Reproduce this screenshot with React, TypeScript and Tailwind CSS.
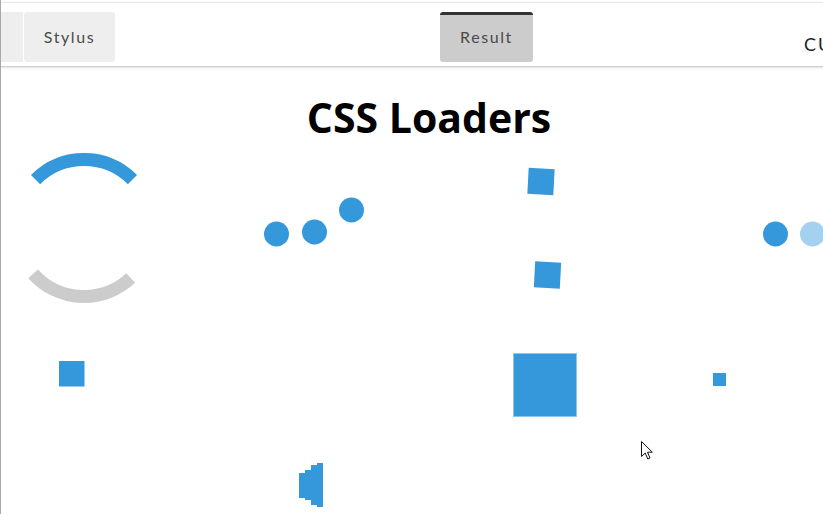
import React from "react";

const BLUE = "#3498db";

function Cursor() {
  return (
    <svg width="14" height="20" viewBox="0 0 14 20" className="absolute left-[640px] top-[441px]">
      <path d="M0.5 0.5 L0.5 15.5 L4.2 12 L6.8 18 L9 17 L6.5 11.2 L11.3 11.2 Z" fill="#fff" stroke="#111" strokeWidth="1" strokeLinejoin="round" />
    </svg>
  );
}

export default function App() {
  return (
    <div className="relative w-[823px] h-[514px] overflow-hidden bg-white border-l border-[#a8a8a8] font-['Lato','Open_Sans',sans-serif]">
      <div className="w-[1000px] pt-[2px]">
        <header className="h-[65px] border-t border-[#e6e6e6] border-b border-b-[#cfcfcf] shadow-[0_1px_2px_rgba(0,0,0,0.12)] flex items-start pt-[9px]">
          <div className="w-[22px] h-[50px] bg-[#eeeeee]" />
          <div className="ml-[1px] w-[91px] h-[50px] bg-[#eeeeee] rounded-[3px] flex items-center justify-center text-[16px] tracking-[1.6px] text-[#4a4a4a]">
            Stylus
          </div>
          <div className="ml-[325px] w-[93px] h-[50px] bg-[#cccccc] rounded-[3px] border-t-[3px] border-[#333] flex items-center justify-center text-[16px] tracking-[1.6px] text-[#4a4a4a] pb-[3px]">
            Result
          </div>
          <div className="ml-[271px] mt-[19px] text-[18px] tracking-[2px] text-[#222] whitespace-nowrap">
            CUSTOMIZE
          </div>
        </header>
      </div>
      <main className="w-[920px] -ml-[1px]">
        <h1 className="w-[858px] mt-[22px] text-center font-['Open_Sans',sans-serif] font-bold text-[41px] leading-[56px] text-black">
          CSS Loaders
        </h1>
        <div className="flex">
          <svg width="230" height="175" className="shrink-0">
            <path d="M35.56 34.56 A68.5 68.5 0 0 1 132.44 34.56" fill="none" stroke={BLUE} strokeWidth="13" />
            <path d="M130.72 133.1 A68.5 68.5 0 0 1 33.1 128.84" fill="none" stroke="#cccccc" strokeWidth="13" />
          </svg>
          <svg width="230" height="175" className="shrink-0">
            <circle cx="46.5" cy="89" r="12.5" fill={BLUE} />
            <circle cx="84.5" cy="87" r="12.5" fill={BLUE} />
            <circle cx="121.5" cy="65" r="12.5" fill={BLUE} />
          </svg>
          <svg width="230" height="175" className="shrink-0">
            <rect x="68" y="23.5" width="26" height="26" fill={BLUE} transform="rotate(3 81 36.5)" />
            <rect x="74.5" y="117" width="26" height="26" fill={BLUE} transform="rotate(3 87.5 130)" />
          </svg>
          <svg width="230" height="175" className="shrink-0">
            <circle cx="85.5" cy="89" r="12.5" fill={BLUE} />
            <circle cx="122.5" cy="89" r="12.5" fill="#a4d1f0" />
            <circle cx="159.5" cy="89" r="12.5" fill="#d6ebf8" />
          </svg>
        </div>
        <div className="flex">
          <svg width="230" height="194" className="shrink-0">
            <rect x="59" y="41" width="25.5" height="25.5" fill={BLUE} />
          </svg>
          <svg width="230" height="194" className="shrink-0">
            <rect x="69" y="153" width="6" height="25" fill={BLUE} />
            <rect x="75" y="150" width="6" height="30" fill={BLUE} />
            <rect x="81" y="145" width="6" height="40" fill={BLUE} />
            <rect x="87" y="143" width="6" height="44" fill={BLUE} />
          </svg>
          <svg width="230" height="194" className="shrink-0">
            <rect x="53.5" y="33.5" width="63" height="63" fill={BLUE} stroke="#8ec6ec" strokeWidth="1" />
          </svg>
          <svg width="230" height="194" className="shrink-0">
            <rect x="23" y="53" width="13" height="13" fill={BLUE} />
          </svg>
        </div>
      </main>
      <Cursor />
    </div>
  );
}
